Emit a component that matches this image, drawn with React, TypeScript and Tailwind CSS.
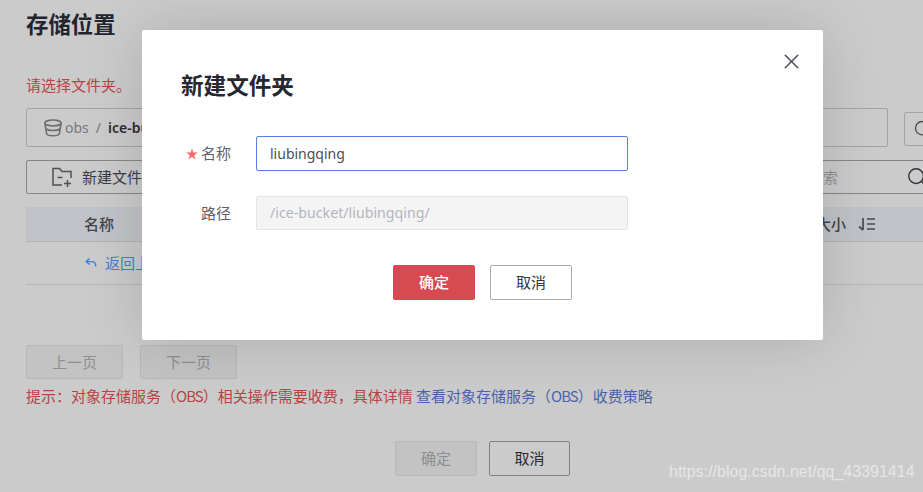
import React from 'react';
import { X, Search } from 'lucide-react';

const font = { fontFamily: '"Noto Sans", "Noto Sans CJK SC", sans-serif' };
const cjkFont = { fontFamily: '"Noto Sans CJK SC", sans-serif' };

const BucketIcon = () => (
  <svg width="20" height="20" viewBox="0 0 20 20" fill="none" stroke="#6b6c70" strokeWidth="1.6">
    <ellipse cx="10" cy="5" rx="8.2" ry="3" />
    <path d="M2 5.5 L3.6 15.5 C4 18.5 16 18.5 16.4 15.5 L18 5.5" />
    <path d="M3 11 C6 13 14 13 17 11" />
  </svg>
);

const NewFolderIcon = () => (
  <svg width="20" height="20" viewBox="0 0 20 20" fill="none" stroke="#4f5157" strokeWidth="1.5">
    <path d="M10 18H1V1.5h6.5L10 4.5h9V11" />
    <path d="M5.5 10.5h5" />
    <path d="M12 16.5h7M15.5 13v7" />
  </svg>
);

const BackIcon = () => (
  <svg width="12" height="12" viewBox="0 0 12 12" fill="none" stroke="#3a82d6" strokeWidth="1.4">
    <path d="M4.5 1.5 1.2 4.6l3.3 3" />
    <path d="M1.5 4.6h5.5c2.6 0 3.8 1.6 3.8 5" />
  </svg>
);

const SortIcon = () => (
  <svg width="19" height="14" viewBox="0 0 19 14" fill="none" stroke="#4a4b52" strokeWidth="1.7">
    <path d="M6 1v12M6 13 2 9.5" />
    <path d="M10 2h8M10 7h8M10 12h8" />
  </svg>
);

const RequiredStar = () => (
  <svg width="12" height="12" viewBox="0 0 11 11" fill="#f46a6a" className="mr-[3px]">
    <path d="M5.5 0.3 6.7 4.2H10.8L7.5 6.6 8.8 10.6 5.5 8.1 2.2 10.6 3.5 6.6 0.2 4.2H4.3Z" />
  </svg>
);

export default function App() {
  return (
    <div className="relative h-[492px] w-full overflow-hidden bg-[#cbcbcb] text-[15px]" style={font}>
      {/* page behind the overlay */}
      <div className="w-[970px] pl-[26px]">
        <h1 className="h-[50px] pt-[8px] text-[22.4px] font-semibold leading-[34px] text-[#23252d]">存储位置</h1>
        <p className="mt-[24px] h-[22px] leading-[22px] text-[#b84345]">请选择文件夹。</p>

        <div className="mt-[12px] flex items-start gap-[16px]">
          <div className="flex h-[39px] w-[862px] items-center rounded-[2px] border border-[#a3a4a8] pl-[16px] text-[14px]">
            <BucketIcon />
            <span className="ml-[2px] text-[#77787d]">obs</span>
            <span className="ml-[7px] text-[#77787d]">/</span>
            <span className="ml-[7px] font-semibold text-[#2b2d33]">ice-bucket</span>
          </div>
          <div className="mt-[4px] flex h-[34px] w-[60px] items-center rounded-[2px] border border-[#a3a4a8] pl-[8px]">
            <Search size={20} strokeWidth={1.6} color="#4a4b52" />
          </div>
        </div>

        <div className="mt-[13px] flex h-[34px] w-[897px] items-stretch justify-between">
          <div className="flex w-[160px] items-center rounded-[2px] border border-[#85868c] pl-[25px] text-[#3c3e45]">
            <NewFolderIcon />
            <span className="ml-[10px]">新建文件夹</span>
          </div>
          <div className="flex w-[215px] items-center border-y border-[#85868c] pl-[10px]">
            <span className="shrink-0 text-[#8f9095]">请输入关键字搜索</span>
            <Search size={22} strokeWidth={1.6} color="#33353b" className="ml-[68px] shrink-0" />
          </div>
        </div>

        <div className="mt-[13px] w-[897px]">
          <div className="flex h-[35px] items-center justify-between border-b border-[#b2b3b7] bg-[#c2c3c8] pl-[58px] pr-[47px] font-medium text-[#43454c]">
            <span>名称</span>
            <span className="flex items-center gap-[11px]">大小<SortIcon /></span>
          </div>
          <div className="flex h-[43px] items-center border-b border-[#b5b5b5] pl-[59px] text-[#3a82d6]">
            <BackIcon />
            <span className="ml-[8px]">返回上一级</span>
          </div>
        </div>

        <div className="mt-[60px] flex gap-[17px]">
          <div className="flex h-[34px] w-[97px] items-center justify-center rounded-[2px] border border-[#b7b8b9] bg-[#c3c3c3] text-[#8d8e90]">上一页</div>
          <div className="flex h-[34px] w-[97px] items-center justify-center rounded-[2px] border border-[#b7b8b9] bg-[#c3c3c3] text-[#8d8e90]">下一页</div>
        </div>

        <p className="mt-[6px] h-[22px] leading-[22px] text-[#b84345]" style={cjkFont}>
          提示：对象存储服务（<span className="tracking-[-1px]">OBS</span>）相关操作需要收费，具体详情 <span className="text-[#4b63ad]">查看对象存储服务（<span className="tracking-[-1px]">OBS</span>）收费策略</span>
        </p>

        <div className="mt-[34px] flex gap-[12px] pl-[369px]">
          <div className="flex h-[35px] w-[82px] items-center justify-center rounded-[2px] border border-[#b7b8b9] bg-[#c3c3c3] text-[#8d8e90]">确定</div>
          <div className="flex h-[35px] w-[81px] items-center justify-center rounded-[2px] border border-[#7f8085] text-[#2b2d33]">取消</div>
        </div>
      </div>

      <span className="absolute left-[669px] top-[463px] text-[16px] leading-[18px] text-[#e6e6e6]" style={{ fontFamily: '"Liberation Sans", sans-serif' }}>
        https://blog.csdn.net/qq_43391414
      </span>

      {/* dialog */}
      <div className="absolute left-[142px] top-[30px] h-[310px] w-[681px] rounded-[2px] bg-white pl-[38px] pt-[39px] shadow-[0_0_60px_rgba(0,0,0,0.15)]">
        <X size={25} strokeWidth={1.5} color="#50525c" className="absolute right-[19px] top-[19px]" />
        <h2 className="ml-[1px] h-[34px] text-[22.6px] font-semibold leading-[34px] text-[#252830]">新建文件夹</h2>

        <div className="mt-[33px] flex h-[35px] items-center">
          <label className="flex w-[76px] items-center justify-end pr-[25px] text-[#5f626c]">
            <RequiredStar />名称
          </label>
          <div className="flex h-[35px] w-[372px] items-center rounded-[2px] border border-[#5b7fe0] pl-[13px] text-[14px] text-[#4a4d57]">liubingqing</div>
        </div>

        <div className="mt-[25px] flex h-[34px] items-center">
          <label className="w-[76px] pr-[25px] text-right text-[#5f626c]">路径</label>
          <div className="flex h-[34px] w-[372px] items-center rounded-[2px] border border-[#e4e5e9] bg-[#f4f4f5] pl-[13px] text-[14.2px] text-[#b3b5bf]">/ice-bucket/liubingqing/</div>
        </div>

        <div className="mt-[35px] flex gap-[15px] pl-[213px]">
          <div className="flex h-[35px] w-[82px] items-center justify-center rounded-[2px] bg-[#d64a52] font-medium text-white">确定</div>
          <div className="flex h-[35px] w-[82px] items-center justify-center rounded-[2px] border border-[#a9abb3] text-[#33353d]">取消</div>
        </div>
      </div>
    </div>
  );
}
